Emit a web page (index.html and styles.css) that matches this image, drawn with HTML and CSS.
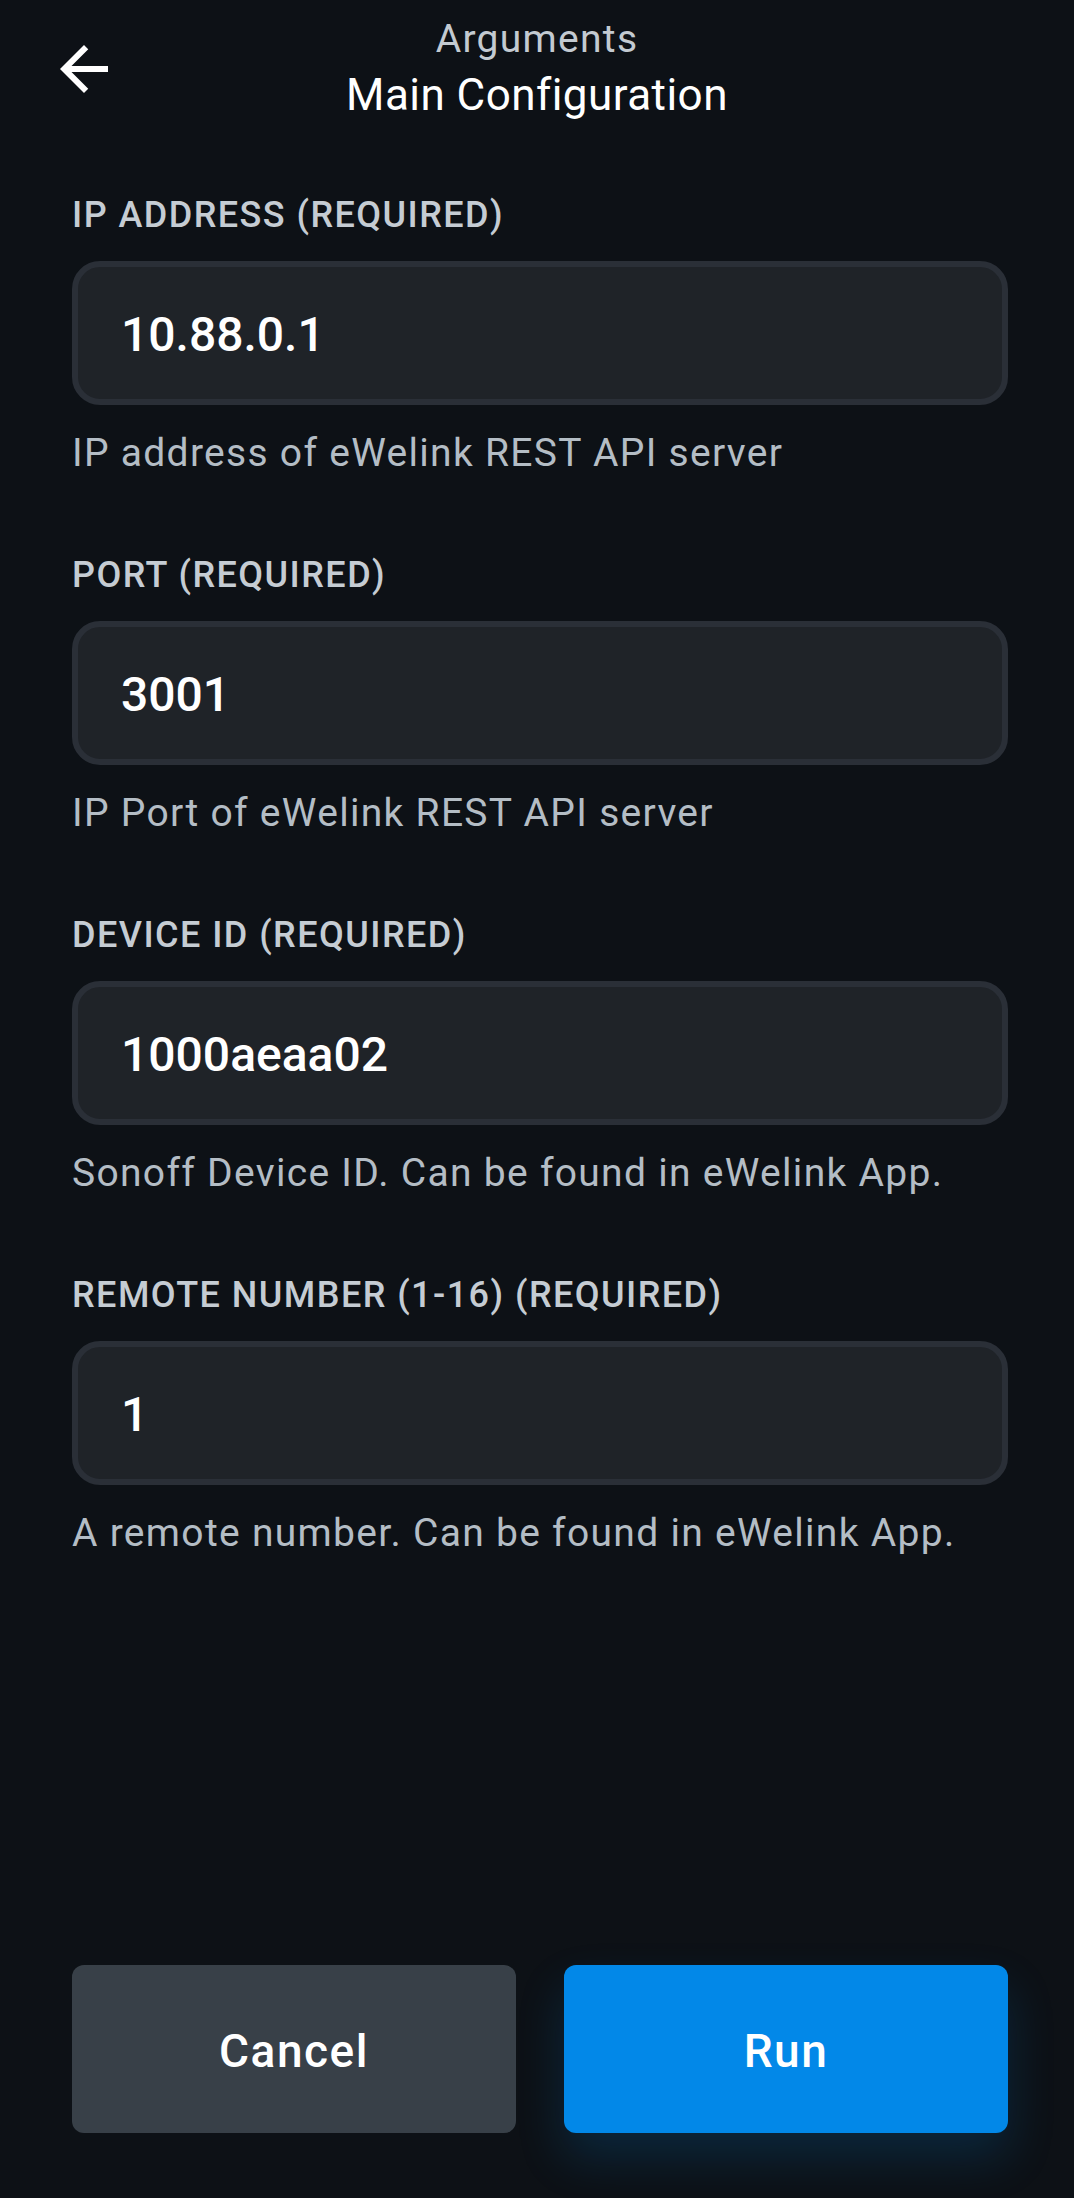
FILE: index.html
```html
<!DOCTYPE html>
<html lang="en">
<head>
<meta charset="utf-8">
<title>Main Configuration</title>
<link rel="stylesheet" href="styles.css">
</head>
<body>
<div class="screen">
  <header class="topbar">
    <button class="back" aria-label="Back">
      <svg viewBox="0 0 24 24" width="72" height="72"><path d="M20 11H7.83l5.59-5.59L12 4l-8 8 8 8 1.41-1.41L7.83 13H20v-2z" fill="#ffffff"/></svg>
    </button>
    <div class="titles">
      <div class="subtitle">Arguments</div>
      <div class="title">Main Configuration</div>
    </div>
    <div class="spacer"></div>
  </header>

  <main class="form">
    <div class="field">
      <label class="label">IP ADDRESS (REQUIRED)</label>
      <input class="input" type="text" value="10.88.0.1" readonly>
      <div class="help">IP address of eWelink REST API server</div>
    </div>
    <div class="field">
      <label class="label">PORT (REQUIRED)</label>
      <input class="input" type="text" value="3001" readonly>
      <div class="help">IP Port of eWelink REST API server</div>
    </div>
    <div class="field">
      <label class="label">DEVICE ID (REQUIRED)</label>
      <input class="input" type="text" value="1000aeaa02" readonly>
      <div class="help">Sonoff Device ID. Can be found in eWelink App.</div>
    </div>
    <div class="field">
      <label class="label">REMOTE NUMBER (1-16) (REQUIRED)</label>
      <input class="input" type="text" value="1" readonly>
      <div class="help">A remote number. Can be found in eWelink App.</div>
    </div>
  </main>

  <footer class="actions">
    <button class="btn btn-cancel">Cancel</button>
    <button class="btn btn-run">Run</button>
  </footer>
</div>
</body>
</html>
```

FILE: styles.css
```css
html, body {
  margin: 0;
  padding: 0;
  background: #0d1116;
}

body {
  font-family: Roboto, "Noto Sans", "Liberation Sans", sans-serif;
  color: #ffffff;
}

.screen {
  min-height: 2198px;
  display: flex;
  flex-direction: column;
  box-sizing: border-box;
}

.topbar {
  display: grid;
  grid-template-columns: 1fr auto 1fr;
  padding-top: 16px;
}

.back {
  justify-self: start;
  align-self: start;
  margin: 17px 0 0 48px;
  width: 72px;
  height: 72px;
  padding: 0;
  border: 0;
  background: transparent;
  display: flex;
}

.titles {
  display: flex;
  flex-direction: column;
  align-items: center;
  gap: 7px;
}

.subtitle {
  font-size: 39px;
  line-height: 46px;
  letter-spacing: 1.3px;
  color: #c3cad1;
}

.title {
  font-size: 44px;
  line-height: 52px;
  letter-spacing: 0.45px;
  color: #ffffff;
}

.form {
  display: flex;
  flex-direction: column;
  gap: 77px;
  padding: 72px 66px 0 72px;
}

.field {
  display: flex;
  flex-direction: column;
}

.label {
  font-size: 36px;
  line-height: 44px;
  font-weight: 500;
  letter-spacing: 1.45px;
  color: #c5ccd3;
}

.input {
  margin-top: 24px;
  box-sizing: border-box;
  width: 100%;
  height: 144px;
  padding: 2px 40px 0 43px;
  border: 6px solid #2a2f37;
  border-radius: 28px;
  background: #1f2328;
  color: #ffffff;
  font-family: Roboto, "Noto Sans", "Liberation Sans", sans-serif;
  font-size: 48px;
  font-weight: 500;
  outline: none;
}

.help {
  margin-top: 25px;
  font-size: 39px;
  line-height: 46px;
  letter-spacing: 1.3px;
  color: #b4bdc5;
}

.actions {
  margin-top: auto;
  display: flex;
  gap: 48px;
  padding: 0 66px 65px 72px;
}

.btn {
  flex: 1;
  height: 168px;
  padding: 4px 0 0;
  border: 0;
  border-radius: 12px;
  font-family: Roboto, "Noto Sans", "Liberation Sans", sans-serif;
  font-size: 46px;
  font-weight: 500;
  letter-spacing: 1.5px;
  color: #ffffff;
}

.btn-cancel {
  background: #384048;
}

.btn-run {
  background: #0288e8;
  box-shadow: 0 24px 48px rgba(2, 136, 232, 0.18);
}
```
